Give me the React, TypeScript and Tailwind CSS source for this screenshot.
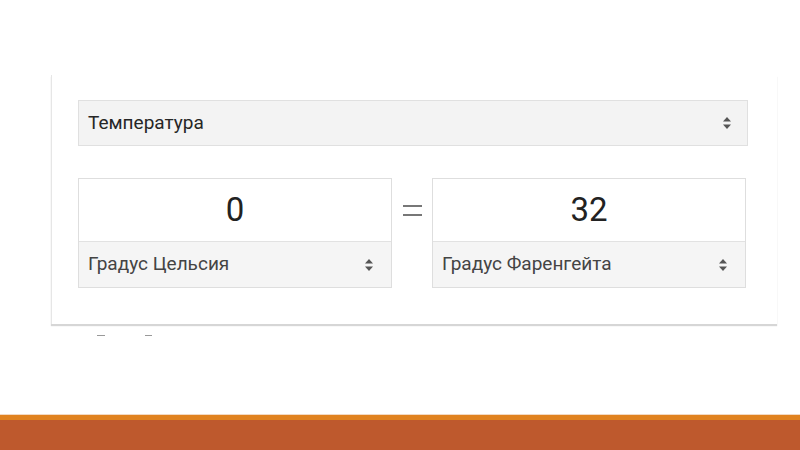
import React from "react";

function Arrows() {
  return (
    <svg width="10" height="14" viewBox="0 0 10 14" className="shrink-0">
      <path d="M5 1 L9 5.5 L1 5.5 Z" fill="#555" />
      <path d="M5 13 L9 8.5 L1 8.5 Z" fill="#555" />
    </svg>
  );
}

function UnitBox({ value, unit }: { value: string; unit: string }) {
  return (
    <div className="flex h-[110px] w-[314px] flex-col border border-[#dedede] bg-white">
      <div className="flex h-[62px] items-center justify-center text-[33px] text-[#222]">{value}</div>
      <div className="flex flex-1 items-center justify-between border-t border-[#e2e2e2] bg-[#f5f5f5] pl-[9px] pr-[17px]">
        <span className="text-[19px] text-[#444]">{unit}</span>
        <Arrows />
      </div>
    </div>
  );
}

export default function App() {
  return (
    <div className="flex h-[450px] w-[800px] flex-col bg-white font-['Roboto',sans-serif]">
      <div className="ml-[51px] mt-[75px] w-[726px] border-l border-[#e6e6e6] pl-[26px] pt-[25px] pb-[36px] shadow-[0_2px_1px_#d6d6d6]">
        <div className="flex h-[46px] w-[670px] items-center justify-between border border-[#e0e0e0] bg-[#f3f3f3] pl-[9px] pr-[15px]">
          <span className="text-[19px] text-[#262626]">Температура</span>
          <Arrows />
        </div>
        <div className="mt-[32px] flex items-start">
          <UnitBox value="0" unit="Градус Цельсия" />
          <div className="mt-[27px] flex w-[40px] flex-col items-center gap-[7px]">
            <div className="h-[2px] w-[19px] bg-[#777]" />
            <div className="h-[2px] w-[19px] bg-[#777]" />
          </div>
          <UnitBox value="32" unit="Градус Фаренгейта" />
        </div>
      </div>
      <div className="ml-[97px] mt-[11px] flex gap-[40px]">
        <div className="h-[1px] w-[8px] bg-[#999]" />
        <div className="h-[1px] w-[7px] bg-[#999]" />
      </div>
      <div className="mt-auto h-[1px] bg-[#f3d9c2]" />
      <div className="h-[5px] bg-[#e0821f]" />
      <div className="h-[30px] bg-[#be592d]" />
    </div>
  );
}
